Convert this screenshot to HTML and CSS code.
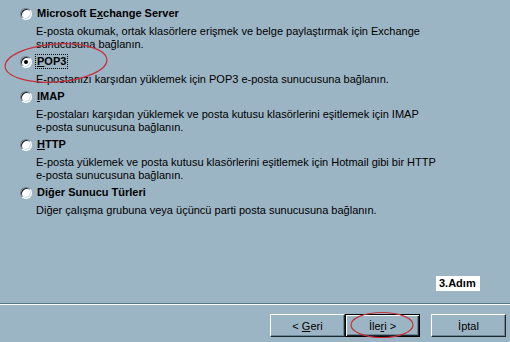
FILE: index.html
```html
<!DOCTYPE html>
<html lang="tr">
<head>
  <meta charset="UTF-8" />
  <title>Sunucu Türü</title>
  <link rel="stylesheet" href="styles.css">
</head>
<body>
  <div class="wizard">
    <div class="options">
      <div class="option">
        <div class="option-head">
          <span class="radio"></span>
          <span class="label">Microsoft E<u>x</u>change Server</span>
        </div>
        <p class="desc">E-posta okumak, ortak klasörlere erişmek ve belge paylaştırmak için Exchange<br>sunucusuna bağlanın.</p>
      </div>
      <div class="option">
        <div class="option-head">
          <span class="radio checked"></span>
          <span class="label focus"><u>P</u>OP3</span>
        </div>
        <p class="desc">E-postanızı karşıdan yüklemek için POP3 e-posta sunucusuna bağlanın.</p>
      </div>
      <div class="option">
        <div class="option-head">
          <span class="radio"></span>
          <span class="label"><u>I</u>MAP</span>
        </div>
        <p class="desc">E-postaları karşıdan yüklemek ve posta kutusu klasörlerini eşitlemek için IMAP<br>e-posta sunucusuna bağlanın.</p>
      </div>
      <div class="option">
        <div class="option-head">
          <span class="radio"></span>
          <span class="label"><u>H</u>TTP</span>
        </div>
        <p class="desc">E-posta yüklemek ve posta kutusu klasörlerini eşitlemek için Hotmail gibi bir HTTP<br>e-posta sunucusuna bağlanın.</p>
      </div>
      <div class="option">
        <div class="option-head">
          <span class="radio"></span>
          <span class="label">Di<u>ğ</u>er Sunucu Türleri</span>
        </div>
        <p class="desc">Diğer çalışma grubuna veya üçüncü parti posta sunucusuna bağlanın.</p>
      </div>
    </div>

    <div class="step-row">
      <span class="step">3.Adım</span>
    </div>

    <div class="separator"></div>

    <div class="buttons">
      <button class="btn">&lt; <u>G</u>eri</button>
      <button class="btn default">İle<u>r</u>i &gt;</button>
      <button class="btn cancel">İptal</button>
    </div>
  </div>

  <!-- red hand-drawn marks over the screenshot -->
  <svg class="marks" width="510" height="342" viewBox="0 0 510 342">
    <ellipse cx="56" cy="63" rx="51" ry="19" transform="rotate(-4 56 63)" />
    <ellipse cx="382" cy="325" rx="31" ry="12.5" />
  </svg>
</body>
</html>
```

FILE: styles.css
```css
/* classic wizard page */
body {
  margin: 0;
  width: 510px;
  height: 342px;
  overflow: hidden;
  background: #9cb5c4;
  font-family: "Liberation Sans", Arial, sans-serif;
  font-size: 11px;
  color: #000;
  position: relative;
}
.wizard { display: flex; flex-direction: column; height: 342px; }
.options { padding: 5px 0 0 20px; height: 265px; }
.option { margin-bottom: 2px; }
.option-head { display: flex; align-items: center; height: 17px; }
.label { font-weight: bold; margin-left: 4px; line-height: 13px; padding: 0 1px; }
.label.focus { outline: 1px dotted #000; outline-offset: 0; }
.desc { margin: 3px 0 0 16px; line-height: 13px; }

.radio {
  width: 12px;
  height: 12px;
  border-radius: 50%;
  box-sizing: border-box;
  background: #fff;
  border: 1px solid;
  border-color: #6a7f8a #ffffff #ffffff #6a7f8a;
  box-shadow: inset 1px 1px 0 #202020, inset -1px -1px 0 #c9d6de;
  position: relative;
}
.radio.checked::after {
  content: "";
  position: absolute;
  left: 3px;
  top: 3px;
  width: 4px;
  height: 4px;
  border-radius: 50%;
  background: #000;
}

.step-row { display: flex; justify-content: flex-end; padding-right: 30px; margin-top: 6px; }
.step {
  background: #fff;
  font-weight: bold;
  font-size: 11px;
  line-height: 15px;
  width: 44px;
  padding-left: 3px;
  box-sizing: border-box;
}

.separator {
  margin-top: 12px;
  border-top: 1px solid #58798a;
  border-bottom: 1px solid #ffffff;
  height: 0;
}

.buttons { display: flex; padding: 9px 0 0 270px; }
.btn {
  width: 75px;
  height: 23px;
  padding: 0;
  font-family: inherit;
  font-size: 11px;
  color: #000;
  background: #9cb5c4;
  border: 1px solid;
  border-color: #ffffff #1b2a32 #1b2a32 #ffffff;
  box-shadow: inset -1px -1px 0 #6d8794;
}
.btn.default { border-color: #000; box-shadow: inset 1px 1px 0 #fff, inset -1px -1px 0 #1b2a32, inset -2px -2px 0 #6d8794; }
.btn.cancel { margin-left: 11px; }

.marks { position: absolute; left: 0; top: 0; pointer-events: none; }
.marks ellipse { fill: none; stroke: #c8303c; stroke-width: 1.2; }
```
